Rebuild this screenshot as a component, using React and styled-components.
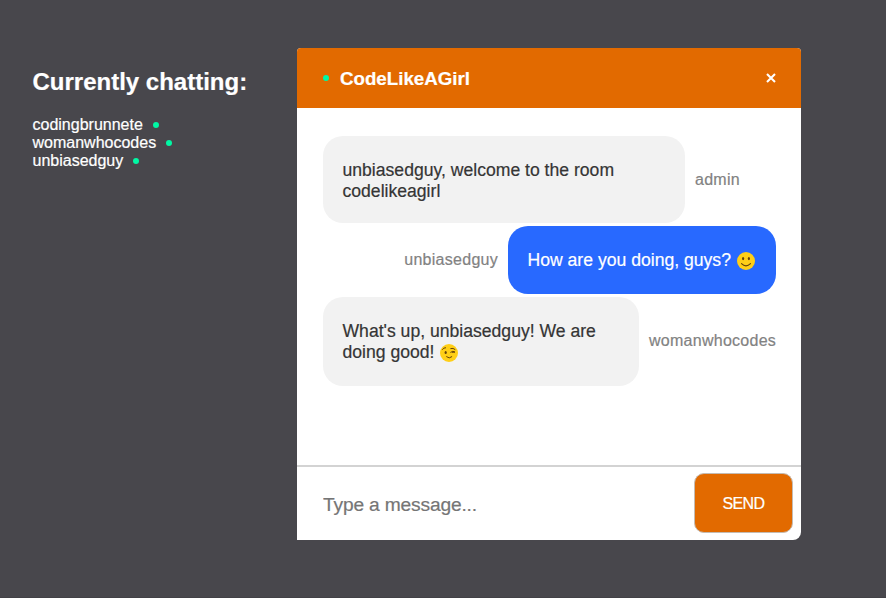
import React from 'react';
import styled, { createGlobalStyle } from 'styled-components';

const GlobalStyle = createGlobalStyle`
  * { box-sizing: border-box; }
  body {
    margin: 0;
    background: #48474c;
    font-family: "Liberation Sans", Helvetica, Arial, sans-serif;
    -webkit-text-stroke: 0.2px;
    overflow: hidden;
  }
`;

const Page = styled.main`
  display: flex;
  align-items: flex-start;
  width: 886px;
  height: 598px;
  background: #48474c;
  border-bottom: 1px solid #424146;
`;

const Sidebar = styled.aside`
  width: 297px;
  padding: 68px 0 0 32.5px;
  color: #fff;
`;

const Heading = styled.h2`
  margin: 0 0 20px;
  font-size: 24px;
  line-height: 28px;
  white-space: nowrap;
`;

const User = styled.div`
  display: flex;
  align-items: center;
  height: 18px;
  font-size: 16px;
  line-height: 18px;
`;

const Dot = styled.span`
  flex: none;
  width: 6px;
  height: 6px;
  border-radius: 50%;
  background: #00f8a4;
  margin: ${(p) => p.$margin || '0 0 0 10px'};
`;

const Chat = styled.section`
  display: flex;
  flex-direction: column;
  width: 504px;
  height: 492px;
  margin-top: 48px;
  background: #fff;
  border-radius: 4px 4px 8px 0;
  overflow: hidden;
`;

const Header = styled.header`
  display: flex;
  align-items: center;
  height: 60px;
  padding: 0 25px 0 26px;
  background: #e26a00;
  color: #fff;
`;

const Room = styled.h3`
  flex: 1;
  margin: 0;
  padding-top: 2px;
  font-size: 18.72px;
  line-height: 22px;
`;

const Close = styled.button`
  display: flex;
  padding: 0;
  border: 0;
  background: none;
`;

const Messages = styled.div`
  display: flex;
  flex: 1;
  flex-direction: column;
  gap: 3px;
  padding: 28px 25px 0 26px;
`;

const Message = styled.div`
  display: flex;
  align-items: center;
  justify-content: ${(p) => (p.$own ? 'flex-end' : 'flex-start')};
  gap: 10px;
`;

const Bubble = styled.div`
  flex: none;
  display: flex;
  flex-direction: column;
  justify-content: center;
  width: ${(p) => p.$width}px;
  height: ${(p) => p.$height}px;
  padding: ${(p) => p.$nudge || 0}px 19.5px 0;
  border-radius: 20px;
  background: ${(p) => (p.$own ? '#2869ff' : '#f2f2f2')};
  color: ${(p) => (p.$own ? '#fff' : '#353535')};
  font-size: 17.6px;
  line-height: 21px;
`;

const Line = styled.div`
  display: flex;
  align-items: center;
  white-space: nowrap;
`;

const Sender = styled.span`
  padding-bottom: ${(p) => p.$lift || 0}px;
  color: #828282;
  font-size: 16px;
  line-height: 18px;
  letter-spacing: 0.27px;
`;

const Emoji = styled.svg`
  flex: none;
  width: 18px;
  height: 18px;
  margin: 1px 0 0 6px;
`;

const Form = styled.form`
  display: flex;
  align-items: center;
  height: 75px;
  padding: 0 8px 0 26px;
  border-top: 2px solid #d3d3d3;
`;

const Input = styled.input`
  flex: 1;
  min-width: 0;
  padding: 3px 0 0;
  border: 0;
  outline: 0;
  font-family: inherit;
  font-size: 19.2px;
  letter-spacing: -0.17px;
  &::placeholder { color: #757575; opacity: 1; }
`;

const Send = styled.button`
  width: 99px;
  height: 60px;
  padding: 1px 0 0;
  margin-top: -1px;
  border: 1px solid #c4bbb2;
  border-radius: 10px;
  background: #e26a00;
  color: #fff;
  font-family: inherit;
  font-size: 16px;
  letter-spacing: -0.6px;
`;

const Smile = () => (
  <Emoji viewBox="0 0 18 18">
    <circle cx="9" cy="9" r="9" fill="#ffcf17" />
    <ellipse cx="6.1" cy="6.6" rx="1.1" ry="1.7" fill="#65420a" />
    <ellipse cx="11.9" cy="6.6" rx="1.1" ry="1.7" fill="#65420a" />
    <path d="M4.5 11.6Q9 16 13.5 11.6" fill="none" stroke="#65420a" strokeWidth="1.1" strokeLinecap="round" />
  </Emoji>
);

const Wink = () => (
  <Emoji viewBox="0 0 18 18">
    <circle cx="9" cy="9" r="9" fill="#ffcf17" />
    <ellipse cx="5.7" cy="8.5" rx="1.1" ry="1.6" fill="#65420a" />
    <g fill="none" stroke="#65420a" strokeWidth="1" strokeLinecap="round" strokeLinejoin="round">
      <path d="M2.5 5.4Q3.5 3.6 5.6 3.7" />
      <path d="M10.8 4.5Q13.2 3.7 15 5.4" />
      <path d="M10.7 8.2Q13 6.3 15 8.1L12.4 8.3" />
      <path d="M6.6 12.8Q9.3 15.2 11.8 12.8" />
    </g>
  </Emoji>
);

export default function App() {
  return (
    <>
      <GlobalStyle />
      <Page>
        <Sidebar>
          <Heading>Currently chatting:</Heading>
          <User>codingbrunnete<Dot /></User>
          <User>womanwhocodes<Dot /></User>
          <User>unbiasedguy<Dot /></User>
        </Sidebar>
        <Chat>
          <Header>
            <Dot $margin="0 11px 0 0" />
            <Room>CodeLikeAGirl</Room>
            <Close type="button" aria-label="Close">
              <svg width="10" height="10" viewBox="0 0 10 10">
                <path d="M1 1L9 9M9 1L1 9" stroke="#fff" strokeWidth="2.1" />
              </svg>
            </Close>
          </Header>
          <Messages>
            <Message>
              <Bubble $width={362} $height={87} $nudge={2}>
                <Line>unbiasedguy, welcome to the room</Line>
                <Line>codelikeagirl</Line>
              </Bubble>
              <Sender>admin</Sender>
            </Message>
            <Message $own>
              <Sender>unbiasedguy</Sender>
              <Bubble $own $width={268} $height={68}>
                <Line>How are you doing, guys?<Smile /></Line>
              </Bubble>
            </Message>
            <Message>
              <Bubble $width={316} $height={89}>
                <Line>What's up, unbiasedguy! We are</Line>
                <Line>doing good!<Wink /></Line>
              </Bubble>
              <Sender $lift={2}>womanwhocodes</Sender>
            </Message>
          </Messages>
          <Form>
            <Input placeholder="Type a message..." />
            <Send type="button">SEND</Send>
          </Form>
        </Chat>
      </Page>
    </>
  );
}
